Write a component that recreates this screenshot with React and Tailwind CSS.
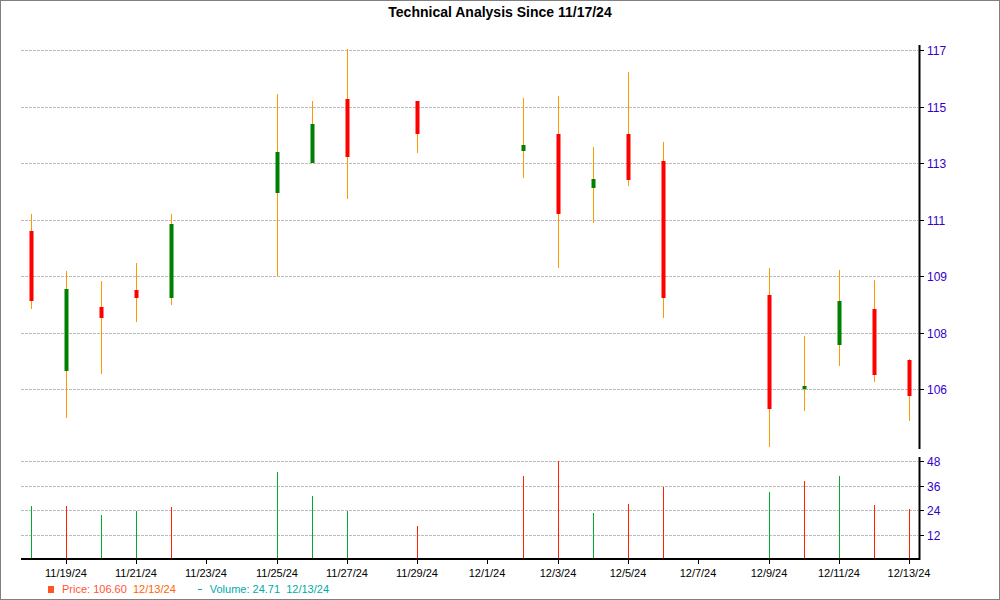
const C=[
[30,213,308,230,300,'r'],[65,270,417,288,370,'g'],[100,280,373,306,317,'r'],[135,262,321,289,297,'r'],[170,213,304,223,297,'g'],
[276,93,275,151,192,'g'],[311,100,162,123,162,'g'],[346,48,198,98,156,'r'],[416,100,152,100,133,'r'],[522,97,177,144,150,'g'],
[557,95,267,133,213,'r'],[592,146,222,178,187,'g'],[627,71,185,133,179,'r'],[662,141,317,160,297,'r'],[768,267,446,294,408,'r'],
[803,335,410,385,388,'g'],[838,269,365,300,344,'g'],[873,279,381,308,374,'r'],[908,358,420,359,395,'r']];
const V=[[30,505,'g'],[65,505,'r'],[100,514,'g'],[135,510,'g'],[170,506,'r'],[276,471,'g'],[311,495,'g'],[346,510,'g'],[416,525,'r'],[522,475,'r'],[557,460,'r'],[592,512,'g'],[627,503,'r'],[662,486,'r'],[768,491,'g'],[803,480,'r'],[838,475,'g'],[873,504,'r'],[908,508,'r']];
const P=[[49,'117'],[106,'115'],[162,'113'],[219,'111'],[275,'109'],[332,'108'],[388,'106']];
const VL=[[460,'48'],[485,'36'],[509,'24'],[534,'12']];
const D=[[65,'11/19/24'],[135,'11/21/24'],[205,'11/23/24'],[276,'11/25/24'],[346,'11/27/24'],[416,'11/29/24'],[486,'12/1/24'],[557,'12/3/24'],[627,'12/5/24'],[697,'12/7/24'],[768,'12/9/24'],[838,'12/11/24'],[908,'12/13/24']];
const col=c=>c==='r'?'#ff0000':'#008000';
export default function App(){
return <div className="w-[1000px] h-[600px] relative bg-white border border-[#808080] overflow-hidden" style={{fontFamily:'"Liberation Sans",Arial,sans-serif'}}>
<div className="text-center font-bold text-[14px] text-black pt-[1px]">Technical Analysis Since 11/17/24</div>
<svg className="absolute left-0 top-0" width="1000" height="600" style={{fontFamily:'"Liberation Sans",Arial,sans-serif'}}>
{P.map(([y,l])=><g key={l}><line x1="20" x2="917" y1={y+.5} y2={y+.5} stroke="#bbb" strokeDasharray="3 1"/><line x1="918" x2="923" y1={y+.5} y2={y+.5} stroke="#000"/><text x="926" y={y+5} fontSize="12" fill="#3300cc">{l}</text></g>)}
{VL.map(([y,l])=><g key={l}><line x1="20" x2="917" y1={y+.5} y2={y+.5} stroke="#bbb" strokeDasharray="3 1"/><line x1="918" x2="923" y1={y+.5} y2={y+.5} stroke="#000"/><text x="926" y={y+5} fontSize="12" fill="#3300cc">{l}</text></g>)}
<line x1="918.5" x2="918.5" y1="44" y2="448" stroke="#000" strokeWidth="2"/>
<line x1="918.5" x2="918.5" y1="456" y2="559" stroke="#000" strokeWidth="2"/>
<line x1="20" x2="919" y1="558" y2="558" stroke="#000" strokeWidth="2"/>
{D.map(([x,l])=><g key={l}><line x1={x+.5} x2={x+.5} y1="558" y2="563" stroke="#000"/><text x={x} y="576" fontSize="11" textAnchor="middle" fill="#000">{l}</text></g>)}
{V.map(([x,y,c],i)=><line key={i} x1={x+.5} x2={x+.5} y1={y} y2="557" stroke={c==='r'?'#ff2200':'#00aa33'}/>)}
{C.map(([x,wt,wb,bt,bb,c],i)=><g key={i}><line x1={x+.5} x2={x+.5} y1={wt} y2={wb} stroke="#ff9900"/><rect x={x-1.5} y={bt} width="4" height={Math.max(bb-bt,3)} fill={col(c)}/></g>)}
</svg>
<div className="absolute left-[47px] top-[580px] flex items-center text-[11px] gap-[22px]">
<span className="flex items-center text-[#ff5533]"><span className="w-[6px] h-[7px] bg-[#ff5522] mr-[8px]"></span>Price: 106.60&nbsp;&nbsp;<span className="text-[#ff6600]">12/13/24</span></span>
<span className="flex items-center text-[#00aaaa]"><span className="w-[4px] h-[1px] bg-[#00aaaa] mr-[8px]"></span>Volume: 24.71&nbsp;&nbsp;12/13/24</span>
</div>
</div>}
